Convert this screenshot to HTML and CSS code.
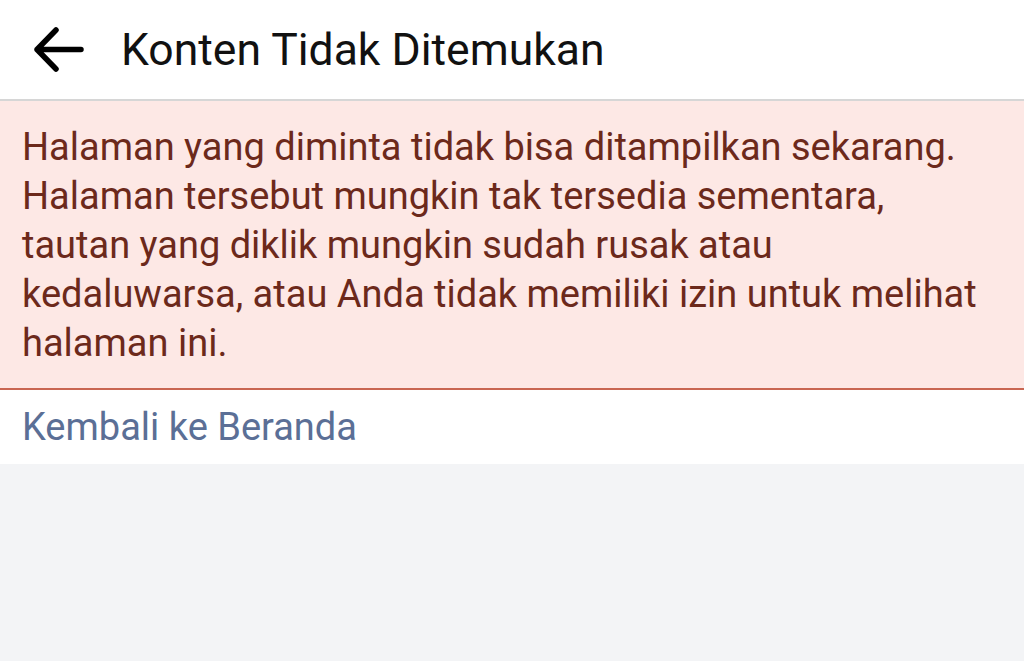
FILE: index.html
```html
<!DOCTYPE html>
<html lang="id">
<head>
  <meta charset="UTF-8">
  <meta name="viewport" content="width=device-width, initial-scale=1">
  <title>Konten Tidak Ditemukan</title>
  <link rel="stylesheet" href="styles.css">
</head>

<body>

  <header class="barra">
    <a class="volver" href="#">
      <svg width="52" height="50" viewBox="0 0 52 50">
        <path d="M49 24.5 H5 M24 5 L5 24.5 L24 44" fill="none" stroke="#000" stroke-width="5.5" stroke-linecap="round" stroke-linejoin="round"/>
      </svg>
    </a>
    <h1>Konten Tidak Ditemukan</h1>
  </header>

  <div class="aviso">
    Halaman yang diminta tidak bisa ditampilkan sekarang. Halaman tersebut mungkin tak tersedia sementara, tautan yang diklik mungkin sudah rusak atau kedaluwarsa, atau Anda tidak memiliki izin untuk melihat halaman ini.
  </div>

  <div class="enlace">
    <a href="#">Kembali ke Beranda</a>
  </div>

</body>
</html>
```

FILE: styles.css
```css
body {
  margin: 0;
  font-family: Roboto, 'Liberation Sans', sans-serif;
  background: #f3f4f6;
  color: #000;
}

.barra {
  display: flex;
  align-items: center;
  height: 99px;
  padding-left: 32px;
  background: #fff;
  border-bottom: 2px solid #d6d6d6;
}

.volver {
  display: flex;
  width: 52px;
  margin-right: 37px;
}

h1 {
  margin: 0;
  font-size: 44.5px;
  font-weight: 400;
  color: #111;
}

.aviso {
  background: #fde8e5;
  color: #6c291b;
  font-size: 38px;
  line-height: 49px;
  padding: 22px 30px 20px 22px;
  border-bottom: 2px solid #c96652;
}

.enlace {
  background: #fff;
  padding: 0 22px;
  height: 74px;
  display: flex;
  align-items: center;
}

.enlace a {
  color: #5b6f96;
  font-size: 38px;
  text-decoration: none;
}
```
